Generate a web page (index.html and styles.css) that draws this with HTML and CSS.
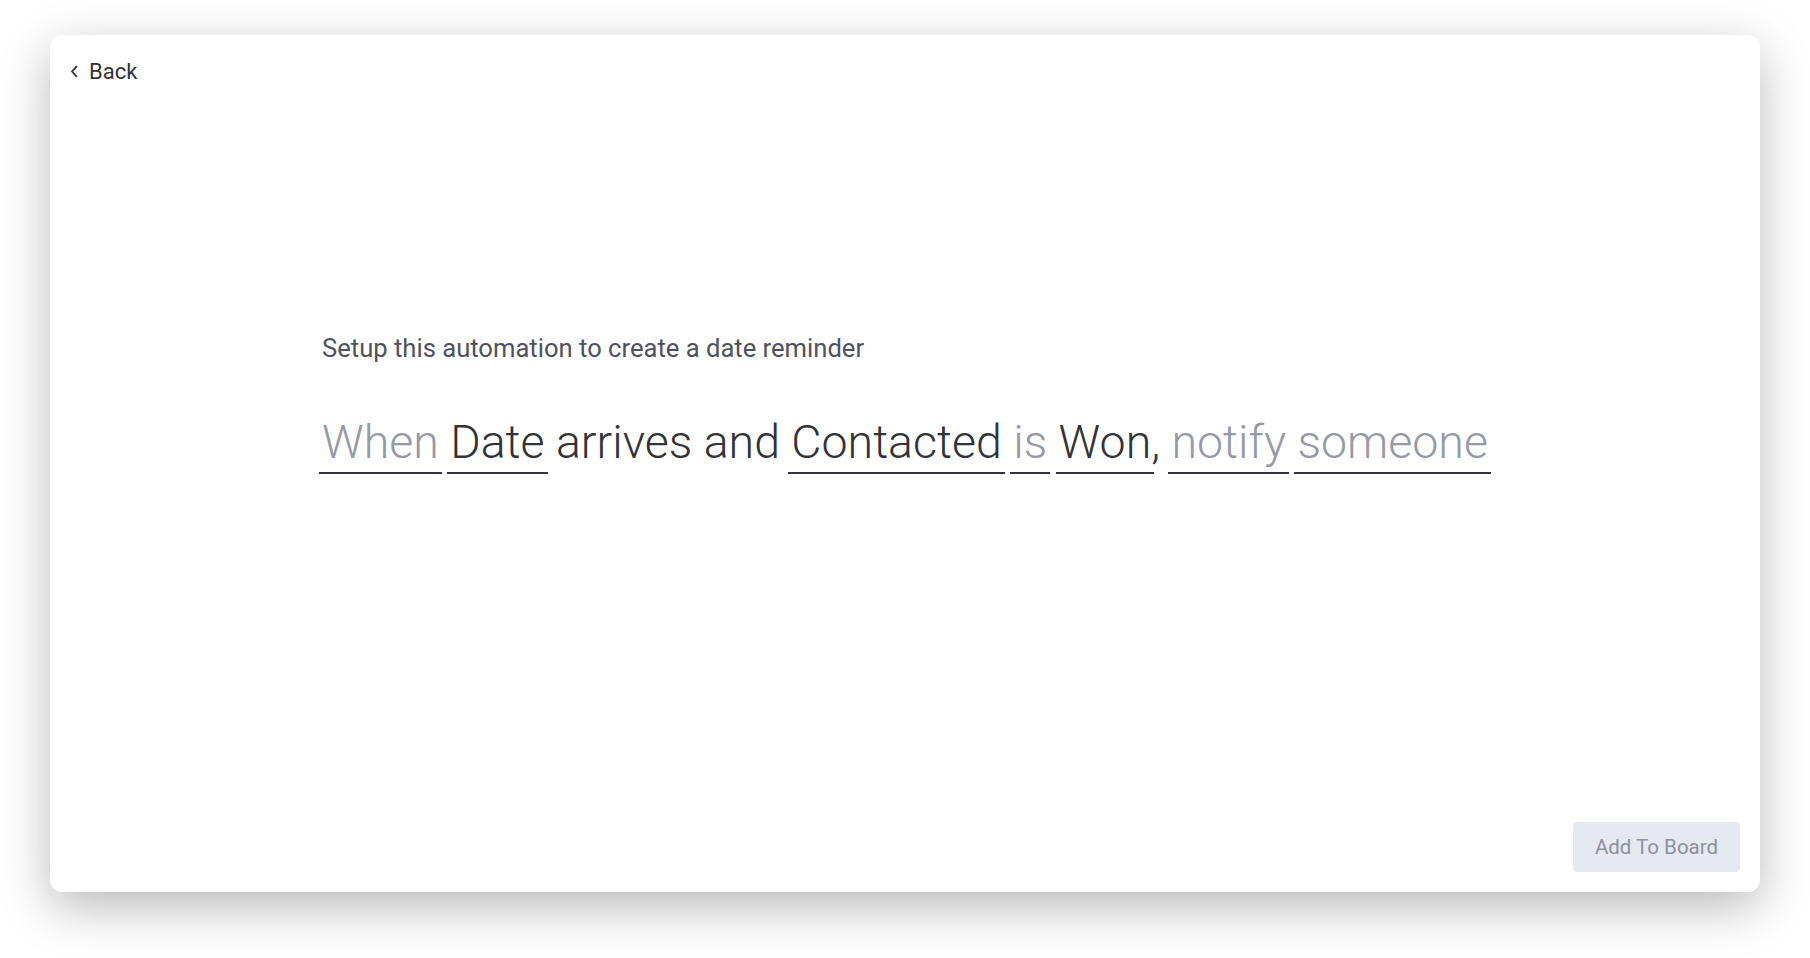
FILE: index.html
```html
<!DOCTYPE html>
<html>
<head>
	<meta charset="utf-8">
	<meta name="viewport" content="width=device-width, initial-scale=1">
	<title>Date reminder</title>

	<link rel="stylesheet" href="styles.css">
</head>
<body>

	<div class="page">
		<div class="card">
			<a class="back" href="#">
				<svg width="10" height="14" viewBox="0 0 10 14"><path d="M7 2.5 L3 7 L7 11.5" fill="none" stroke="#323338" stroke-width="1.5"/></svg>
				Back
			</a>

			<div class="content">
				<p class="subtitle">Setup this automation to create a date reminder</p>
				<p class="sentence"><span class="field muted">When</span> <span class="field">Date</span> arrives and <span class="field">Contacted</span> <span class="field muted">is</span> <span class="field">Won</span>, <span class="field muted">notify</span> <span class="field muted">someone</span></p>
			</div>

			<button class="add">Add To Board</button>
		</div>
	</div>

</body>
</html>
```

FILE: styles.css
```css
*{
	margin: 0;
	padding: 0;
	box-sizing: border-box;
}
body{
	background: #fff;
	font-family: Roboto, "Liberation Sans", sans-serif;
	color: #323338;
}
.page{
	padding: 35px 50px 66px 50px;
	height: 100vh;
}
.card{
	display: flex;
	flex-direction: column;
	height: 100%;
	background: #fff;
	border-radius: 12px;
	box-shadow: 0 15px 50px rgba(0,0,0,0.28);
	padding: 24px 20px 20px 18px;
}
.back{
	display: flex;
	align-items: center;
	gap: 8px;
	align-self: flex-start;
	font-size: 22px;
	color: #323338;
	text-decoration: none;
}
.back svg{
	width: 13px;
	height: 17px;
}
.content{
	padding-left: 254px;
	margin-top: 249px;
}
.subtitle{
	font-size: 25.6px;
	color: #4f525e;
}
.sentence{
	margin-top: 52px;
	font-size: 46.5px;
	font-weight: 300;
	color: #323338;
}
.field{
	display: inline-block;
	padding: 0 3px 3px;
	margin: 0 -3px;
	border-bottom: 2px solid #323338;
}
.field.muted{
	color: #9699a6;
}
.add{
	margin-top: auto;
	align-self: flex-end;
	width: 167px;
	height: 50px;
	border: none;
	border-radius: 4px;
	background: #e6e9ef;
	color: #8d90a0;
	font-family: Roboto, "Liberation Sans", sans-serif;
	font-size: 20.5px;
}
```
